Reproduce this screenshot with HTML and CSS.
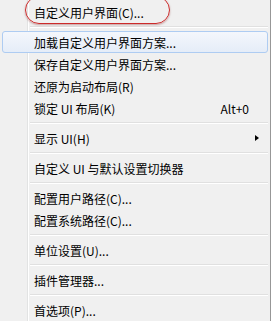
FILE: index.html
```html
<!DOCTYPE html>
<html>
<head>
<meta charset="utf-8">
<link rel="stylesheet" href="styles.css">
</head>
<body>
<div class="menu">
  <div class="item"><span class="label">自定义用户界面(C)...</span></div>
  <div class="sep"></div>
  <div class="item hover"><span class="label">加载自定义用户界面方案...</span></div>
  <div class="item"><span class="label">保存自定义用户界面方案...</span></div>
  <div class="item"><span class="label">还原为启动布局(R)</span></div>
  <div class="item"><span class="label">锁定 UI 布局(K)</span><span class="key">Alt+0</span></div>
  <div class="sep"></div>
  <div class="item"><span class="label">显示 UI(H)</span><span class="arrow"></span></div>
  <div class="sep"></div>
  <div class="item"><span class="label">自定义 UI 与默认设置切换器</span></div>
  <div class="sep"></div>
  <div class="item"><span class="label">配置用户路径(C)...</span></div>
  <div class="item"><span class="label">配置系统路径(C)...</span></div>
  <div class="sep"></div>
  <div class="item"><span class="label">单位设置(U)...</span></div>
  <div class="sep"></div>
  <div class="item"><span class="label">插件管理器...</span></div>
  <div class="sep"></div>
  <div class="item"><span class="label">首选项(P)...</span></div>
  <div class="mark"></div>
</div>
</body>
</html>
```
FILE: styles.css
```css
html, body {
  margin: 0;
  padding: 0;
  background: #ffffff;
}
.menu {
  position: relative;
  width: 270px;
  padding-top: 1px;
  background: #f0f0f0;
  border-right: 1px solid #979797;
  font-family: "Noto Sans CJK SC", "Liberation Sans", sans-serif;
  font-size: 12px;
  color: #000;
  display: flex;
  flex-direction: column;
}
.menu::before {
  content: "";
  position: absolute;
  left: 27px;
  top: 0;
  bottom: 0;
  width: 1px;
  background: #e2e3e3;
  border-right: 1px solid #ffffff;
}
.item {
  position: relative;
  height: 22px;
  margin: 0 2px;
  padding-left: 31px;
  padding-right: 18px;
  display: flex;
  align-items: center;
  box-sizing: border-box;
  border: 1px solid transparent;
  border-radius: 3px;
  z-index: 1;
}
.item .label {
  flex: 1;
  white-space: nowrap;
}
.item.hover {
  border-color: #aeccf2;
  background: linear-gradient(#f4f7fc, #e5edf8);
}
.key {
  white-space: nowrap;
  margin-right: 0;
}
.arrow {
  width: 0;
  height: 0;
  border-top: 3.5px solid transparent;
  border-bottom: 3.5px solid transparent;
  border-left: 4px solid #000;
  margin-right: -10px;
}
.sep {
  height: 8px;
  margin-left: 30px;
  margin-right: 2px;
  display: flex;
  flex-direction: column;
  justify-content: center;
  position: relative;
  z-index: 1;
}
.sep::before {
  content: "";
  display: block;
  height: 1px;
  background: #e0e0e0;
  border-bottom: 1px solid #ffffff;
}
.mark {
  position: absolute;
  left: 25px;
  top: -4px;
  width: 143px;
  height: 26px;
  border: 1.5px solid #cc2a2a;
  border-radius: 14px;
  box-shadow: 0 1px 2px rgba(120, 0, 0, 0.35);
  z-index: 2;
}
```
